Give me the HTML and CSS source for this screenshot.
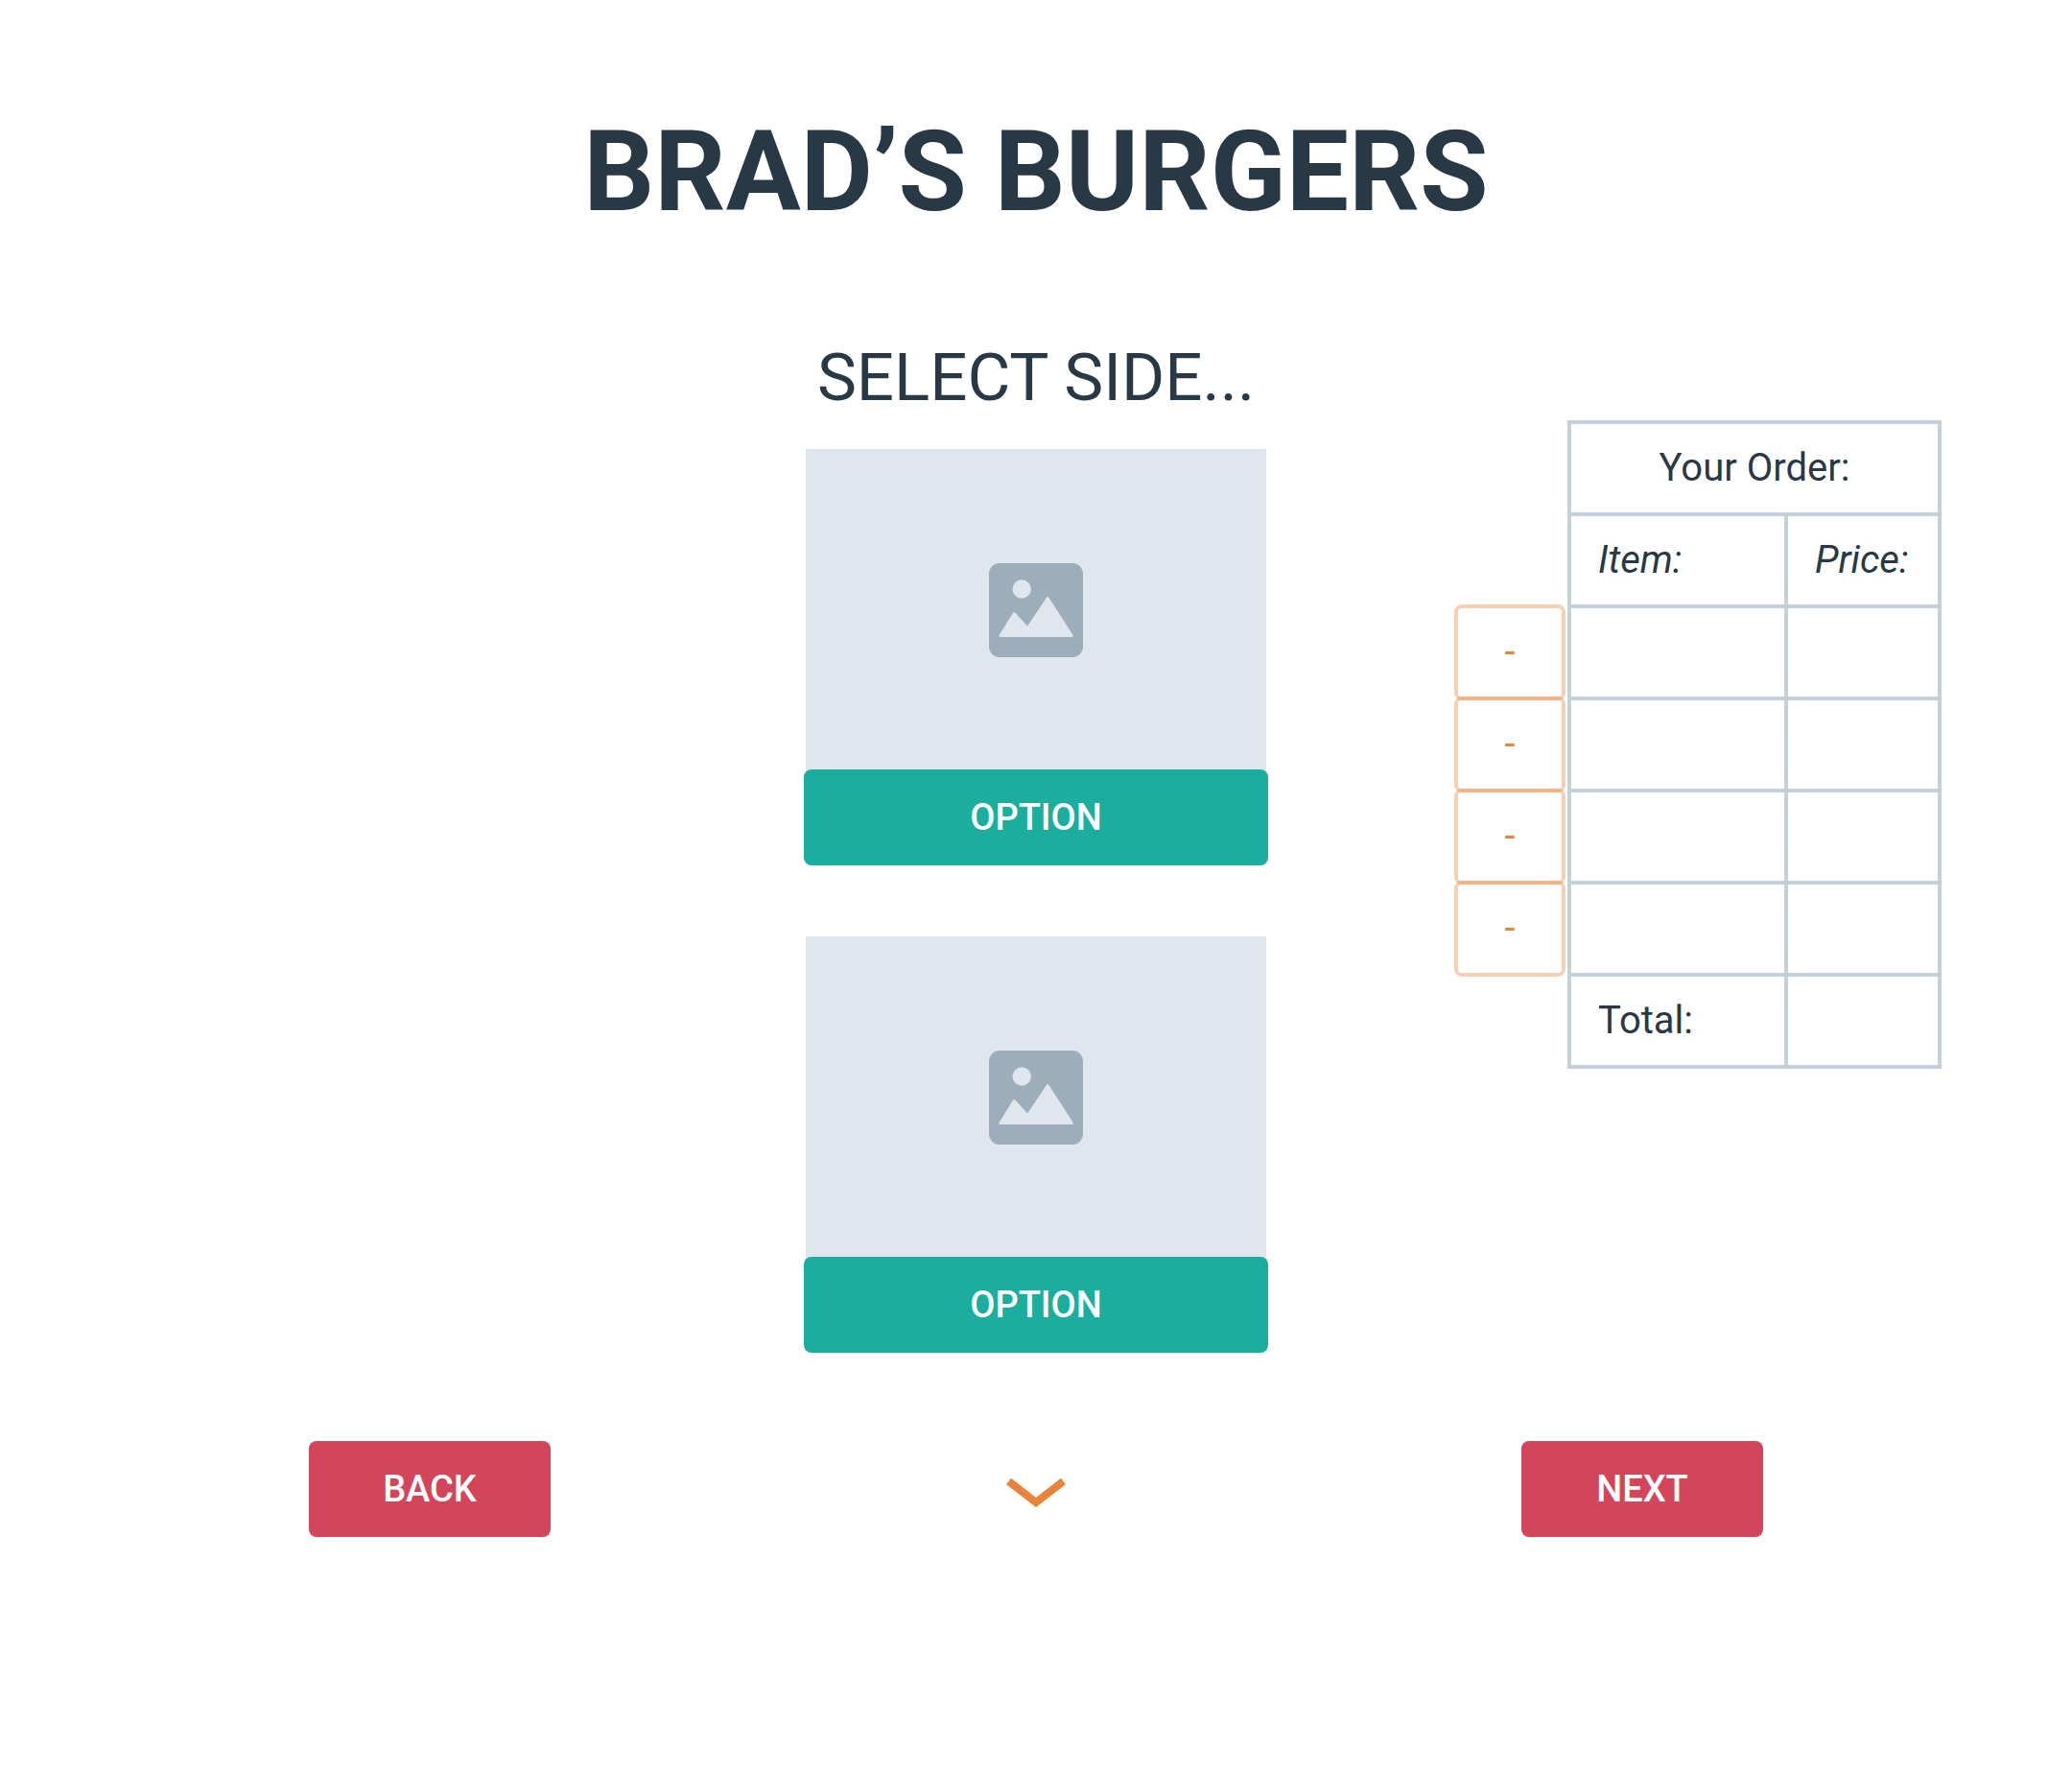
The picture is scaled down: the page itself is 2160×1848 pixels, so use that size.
FILE: index.html
```html
<!DOCTYPE html>
<html lang="en">
<head>
<meta charset="utf-8">
<meta name="viewport" content="width=device-width, initial-scale=1">
<title>Brad’s Burgers</title>
<link rel="stylesheet" href="styles.css">
</head>
<body>
<svg class="sprite" aria-hidden="true">
  <symbol id="picture" viewBox="0 0 98 98">
    <rect class="frame" width="98" height="98" rx="11"/>
    <circle class="shape" cx="34.2" cy="27" r="9.7"/>
    <path class="shape" d="M12 77Q9.800 77 10.900 74.500L25 51.700Q26.200 50.200 27.400 51.700L40.100 65.500L59.900 36Q61.200 34.200 62.500 36L87.300 74.500Q88.500 77 86.200 77Z"/>
  </symbol>
</svg>
<header class="page-header">
  <h1 class="title">BRAD’S BURGERS</h1>
</header>
<main class="content">
  <section class="menu" aria-labelledby="step">
    <h2 class="step" id="step">SELECT SIDE...</h2>
    <div class="options">
      <article class="card">
        <div class="photo"><svg class="photo-icon" aria-hidden="true"><use href="#picture"/></svg></div>
        <button class="button option" type="button">OPTION</button>
      </article>
      <article class="card">
        <div class="photo"><svg class="photo-icon" aria-hidden="true"><use href="#picture"/></svg></div>
        <button class="button option" type="button">OPTION</button>
      </article>
    </div>
  </section>
  <aside class="order">
    <div class="removers">
      <button class="remove" type="button">-</button>
      <button class="remove" type="button">-</button>
      <button class="remove" type="button">-</button>
      <button class="remove" type="button">-</button>
    </div>
    <table class="bill">
      <colgroup><col class="col-item"><col class="col-price"></colgroup>
      <thead>
        <tr><th class="bill-title" colspan="2">Your Order:</th></tr>
        <tr class="labels"><th scope="col">Item:</th><th scope="col">Price:</th></tr>
      </thead>
      <tbody>
        <tr><td></td><td></td></tr>
        <tr><td></td><td></td></tr>
        <tr><td></td><td></td></tr>
        <tr><td></td><td></td></tr>
      </tbody>
      <tfoot>
        <tr><th scope="row">Total:</th><td></td></tr>
      </tfoot>
    </table>
  </aside>
</main>
<nav class="steps">
  <button class="button step-button" type="button">BACK</button>
  <button class="more" type="button" aria-label="More options">
    <svg class="chevron" viewBox="0 0 62 32" aria-hidden="true"><path d="M2.500 4L31 26L59.500 4"/></svg>
  </button>
  <button class="button step-button" type="button">NEXT</button>
</nav>
</body>
</html>
```

FILE: styles.css
```css
* {
  box-sizing: border-box;
}

body {
  margin: 0;
  background: #fff;
  color: #293845;
  font-family: Roboto, "Liberation Sans", sans-serif;
  font-size: 40px;
  line-height: 48px;
}

button {
  padding: 0;
  border: 0;
  font: inherit;
  cursor: pointer;
}

.sprite {
  display: none;
}

.page-header {
  padding-top: 112px;
  text-align: center;
}

.title {
  margin: 0;
  font-size: 116px;
  font-weight: 700;
  line-height: 134px;
}

.content {
  display: grid;
  grid-template-columns: 1fr 484px 1fr;
  align-items: start;
}

.menu {
  grid-column: 2;
  padding-top: 108px;
}

.step {
  margin: 0 0 34px;
  font-size: 69px;
  font-weight: 400;
  line-height: 80px;
  text-align: center;
}

.options {
  display: flex;
  flex-direction: column;
  gap: 74px;
}

.card {
  display: flex;
  flex-direction: column;
}

.photo {
  display: flex;
  align-items: center;
  justify-content: center;
  height: 336px;
  margin: 0 2px -2px;
  background: #dfe6ed;
}

.photo-icon {
  width: 98px;
  height: 98px;
}

.frame {
  fill: #9eadba;
}

.shape {
  fill: #dfe6ed;
}

.button {
  height: 100px;
  border-radius: 8px;
  color: #fff;
  font-size: 38px;
  font-weight: 500;
}

.option {
  position: relative;
  background: #1bae9f;
}

.order {
  display: flex;
  justify-content: flex-end;
  gap: 2px;
  padding: 192px 136px 0 0;
}

/* The buttons line up with the item rows, below the two heading rows. */
.removers {
  display: flex;
  flex-direction: column;
  padding-top: 192px;
}

.remove {
  width: 116px;
  height: 100px;
  border: 4px solid rgba(232, 131, 58, 0.38);
  border-radius: 8px;
  background: none;
  color: #e8833a;
}

.remove + .remove {
  margin-top: -4px;
}

.bill {
  width: 390px;
  border-collapse: collapse;
  table-layout: fixed;
}

.col-item {
  width: 226px;
}

.bill tr {
  height: 96px;
}

.bill th,
.bill td {
  padding: 0 0 0 28px;
  border: 4px solid #c3cfd9;
  font-weight: 400;
  text-align: left;
}

.bill .bill-title {
  padding: 0;
  text-align: center;
}

.labels {
  font-style: italic;
}

.steps {
  display: flex;
  align-items: center;
  justify-content: space-between;
  padding: 92px 322px;
}

.step-button {
  width: 252px;
  background: #d3455b;
}

.more {
  display: flex;
  align-items: center;
  justify-content: center;
  width: 100px;
  height: 100px;
  padding-top: 8px;
  background: none;
}

.chevron {
  width: 62px;
  height: 32px;
  fill: none;
  stroke: #e8833a;
  stroke-width: 8px;
}
```
